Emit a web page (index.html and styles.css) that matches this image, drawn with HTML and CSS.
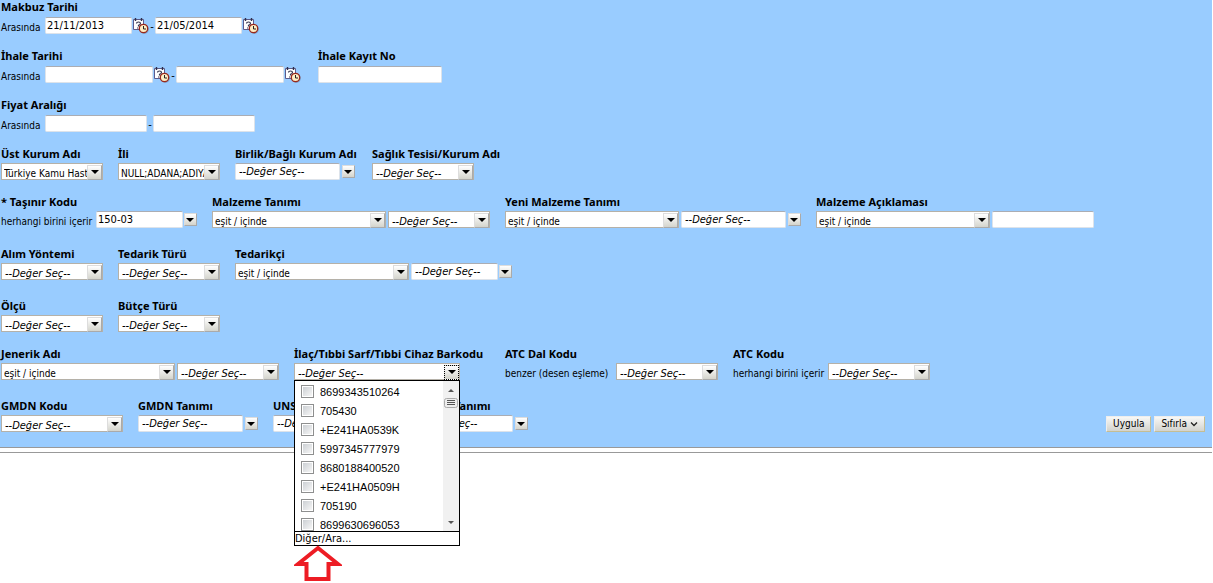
FILE: index.html
```html
<!DOCTYPE html>
<html lang="tr">
<head>
<meta charset="utf-8">
<title>Makbuz Sorgu</title>
<link rel="stylesheet" href="styles.css">
</head>
<body>
<svg class="defs" aria-hidden="true">
  <symbol id="cal" viewBox="0 0 16 16">
    <path d="M0.500 1.500h10v10h-10z" fill="#fff" stroke="#5c5c8c"/>
    <path d="M2.500 0v3M8.500 0v3" stroke="#30304c" stroke-width="1.400"/>
    <path d="M3.500 5.500q0-1.500 2-1.500t2 1.400q0 1-2 2v1" fill="none" stroke="#34344c" stroke-width="1.200"/>
    <path d="M4 10h1.200" stroke="#34344c"/>
    <circle cx="11.300" cy="11.300" r="4.600" fill="#6b86ae" opacity=".6"/>
    <circle cx="10.500" cy="10.500" r="4.200" fill="#ffeec4" stroke="#98291d" stroke-width="1.300"/>
    <path d="M10.500 8v3h2.500" fill="none" stroke="#222"/>
  </symbol>
</svg>
<form class="panel">
  <div class="row row-text">
    <div class="field">
      <label class="title" for="mt1">Makbuz Tarihi</label>
      <div class="controls"><span class="op">Arasında</span><input class="box w-date" id="mt1" value="21/11/2013"><button type="button" class="cal" aria-label="Takvim"><svg><use href="#cal"/></svg></button><span class="dash">-</span><input class="box w-date" aria-label="Bitiş" value="21/05/2014"><button type="button" class="cal" aria-label="Takvim"><svg><use href="#cal"/></svg></button></div>
    </div>
  </div>
  <div class="row row-text">
    <div class="field f-tender">
      <label class="title" for="it1">İhale Tarihi</label>
      <div class="controls"><span class="op">Arasında</span><input class="box w-range" id="it1"><button type="button" class="cal" aria-label="Takvim"><svg><use href="#cal"/></svg></button><span class="dash">-</span><input class="box w-range" aria-label="Bitiş"><button type="button" class="cal" aria-label="Takvim"><svg><use href="#cal"/></svg></button></div>
    </div>
    <div class="field">
      <label class="title" for="ikn">İhale Kayıt No</label>
      <div class="controls"><input class="box w-no" id="ikn"></div>
    </div>
  </div>
  <div class="row row-text">
    <div class="field">
      <label class="title" for="fa">Fiyat Aralığı</label>
      <div class="controls"><span class="op">Arasında</span><input class="box w-small" id="fa"><span class="dash">-</span><input class="box w-small" aria-label="Bitiş"></div>
    </div>
  </div>
  <div class="row">
    <div class="field">
      <label class="title" for="uka">Üst Kurum Adı</label>
      <div class="controls"><span class="pick w-small"><select id="uka"><option>Türkiye Kamu Hastaneleri</option></select></span></div>
    </div>
    <div class="field">
      <label class="title" for="ili">İli</label>
      <div class="controls"><span class="pick w-small"><select id="ili"><option>NULL;ADANA;ADIYAMAN</option></select></span></div>
    </div>
    <div class="field f-unit">
      <label class="title" for="bka">Birlik/Bağlı Kurum Adı</label>
      <div class="controls"><input class="box hint w-combo" id="bka" value="--Değer Seç--"><button type="button" class="drop" aria-label="Seç"></button></div>
    </div>
    <div class="field">
      <label class="title" for="stk">Sağlık Tesisi/Kurum Adı</label>
      <div class="controls"><span class="pick w-small"><select class="hint" id="stk"><option>--Değer Seç--</option></select></span></div>
    </div>
  </div>
  <div class="row row-loose">
    <div class="field">
      <label class="title" for="tk">* Taşınır Kodu</label>
      <div class="controls"><span class="op op-long">herhangi birini içerir</span><input class="box w-date" id="tk" value="150-03"><button type="button" class="drop" aria-label="Seç"></button></div>
    </div>
    <div class="field">
      <label class="title" for="mta">Malzeme Tanımı</label>
      <div class="controls"><span class="pick w-wide"><select id="mta"><option>eşit / içinde</option></select></span><span class="pick w-small"><select class="hint" aria-label="Değer"><option>--Değer Seç--</option></select></span></div>
    </div>
    <div class="field">
      <label class="title" for="ymt">Yeni Malzeme Tanımı</label>
      <div class="controls"><span class="pick w-wide"><select id="ymt"><option>eşit / içinde</option></select></span><input class="box hint w-combo" aria-label="Değer" value="--Değer Seç--"><button type="button" class="drop" aria-label="Seç"></button></div>
    </div>
    <div class="field">
      <label class="title" for="mac">Malzeme Açıklaması</label>
      <div class="controls"><span class="pick w-wide"><select id="mac"><option>eşit / içinde</option></select></span><input class="box w-small" aria-label="Değer"></div>
    </div>
  </div>
  <div class="row row-loose">
    <div class="field">
      <label class="title" for="ay">Alım Yöntemi</label>
      <div class="controls"><span class="pick w-small"><select class="hint" id="ay"><option>--Değer Seç--</option></select></span></div>
    </div>
    <div class="field">
      <label class="title" for="tt">Tedarik Türü</label>
      <div class="controls"><span class="pick w-small"><select class="hint" id="tt"><option>--Değer Seç--</option></select></span></div>
    </div>
    <div class="field">
      <label class="title" for="ted">Tedarikçi</label>
      <div class="controls"><span class="pick w-wide"><select id="ted"><option>eşit / içinde</option></select></span><input class="box hint w-date" aria-label="Değer" value="--Değer Seç--"><button type="button" class="drop" aria-label="Seç"></button></div>
    </div>
  </div>
  <div class="row">
    <div class="field">
      <label class="title" for="olc">Ölçü</label>
      <div class="controls"><span class="pick w-small"><select class="hint" id="olc"><option>--Değer Seç--</option></select></span></div>
    </div>
    <div class="field">
      <label class="title" for="but">Bütçe Türü</label>
      <div class="controls"><span class="pick w-small"><select class="hint" id="but"><option>--Değer Seç--</option></select></span></div>
    </div>
  </div>
  <div class="row row-loose">
    <div class="field">
      <label class="title" for="ja">Jenerik Adı</label>
      <div class="controls"><span class="pick w-wide"><select id="ja"><option>eşit / içinde</option></select></span><span class="pick w-small"><select class="hint" aria-label="Değer"><option>--Değer Seç--</option></select></span></div>
    </div>
    <div class="field f-barcode">
      <label class="title" for="bar">İlaç/Tıbbi Sarf/Tıbbi Cihaz Barkodu</label>
      <div class="controls"><span class="pick w-barcode is-open"><select class="hint" id="bar"><option>--Değer Seç--</option></select></span></div>
      <div class="popup">
        <div class="popup-body">
          <div class="list">
            <label class="item"><input type="checkbox">8699343510264</label>
            <label class="item"><input type="checkbox">705430</label>
            <label class="item"><input type="checkbox">+E241HA0539K</label>
            <label class="item"><input type="checkbox">5997345777979</label>
            <label class="item"><input type="checkbox">8680188400520</label>
            <label class="item"><input type="checkbox">+E241HA0509H</label>
            <label class="item"><input type="checkbox">705190</label>
            <label class="item"><input type="checkbox">8699630696053</label>
          </div>
          <div class="scroll">
            <svg class="scroll-top" viewBox="0 0 16 28"><path d="M5 11l3-3 3 3z" fill="#555"/><rect x="1.500" y="17.500" width="13" height="9" rx="2" fill="#eee" stroke="#aaa"/><path d="M4 19.500h8M4 21.500h8M4 23.500h8" stroke="#555"/></svg>
            <svg class="scroll-end" viewBox="0 0 16 16"><path d="M5 6h6l-3 3z" fill="#555"/></svg>
          </div>
        </div>
        <a class="more" href="#">Diğer/Ara...</a>
        <svg class="pointer" viewBox="0 0 48 38"><path d="M24 3L4 19h8.500v15h22V19H44z" fill="#fff" stroke="#ed1c24" stroke-width="4"/></svg>
      </div>
    </div>
    <div class="field">
      <label class="title" for="adk">ATC Dal Kodu</label>
      <div class="controls"><span class="op op-match">benzer (desen eşleme)</span><span class="pick w-small"><select class="hint" id="adk"><option>--Değer Seç--</option></select></span></div>
    </div>
    <div class="field">
      <label class="title" for="atc">ATC Kodu</label>
      <div class="controls"><span class="op op-long">herhangi birini içerir</span><span class="pick w-small"><select class="hint" id="atc"><option>--Değer Seç--</option></select></span></div>
    </div>
  </div>
  <div class="row">
    <div class="field">
      <label class="title" for="gk">GMDN Kodu</label>
      <div class="controls"><span class="pick w-code"><select class="hint" id="gk"><option>--Değer Seç--</option></select></span></div>
    </div>
    <div class="field">
      <label class="title" for="gt">GMDN Tanımı</label>
      <div class="controls"><input class="box hint w-combo" id="gt" value="--Değer Seç--"><button type="button" class="drop" aria-label="Seç"></button></div>
    </div>
    <div class="field">
      <label class="title" for="uk">UNSPSC Kodu</label>
      <div class="controls"><input class="box hint w-combo" id="uk" value="--Değer Seç--"><button type="button" class="drop" aria-label="Seç"></button></div>
    </div>
    <div class="field">
      <label class="title" for="ut">UNSPSC Tanımı</label>
      <div class="controls"><input class="box hint w-combo" id="ut" value="--Değer Seç--"><button type="button" class="drop" aria-label="Seç"></button></div>
    </div>
    <div class="actions">
      <button type="button" class="btn">Uygula</button>
      <button type="button" class="btn">Sıfırla<svg class="chev" viewBox="0 0 8 6"><path d="M1 1.500l3 3 3-3" fill="none" stroke="#222" stroke-width="1.300"/></svg></button>
    </div>
  </div>
</form>
<div class="rule"></div>
</body>
</html>
```
FILE: styles.css
```css
* {
  box-sizing: border-box;
}

body {
  min-height: 100vh;
  margin: 0;
  background: #fff;
  color: #000;
  font: 11px/14px "DejaVu Sans Condensed", "DejaVu Sans", sans-serif;
}

input,
select,
button {
  margin: 0;
  font: inherit;
  color: inherit;
}

.defs {
  position: absolute;
  width: 0;
  height: 0;
}

.panel {
  background: #99ccff;
  border-bottom: 1px solid #999;
  padding-left: 1px;
  margin-right: 1px;
}

.rule {
  height: 5px;
  margin-right: 1px;
  border-bottom: 1px solid #999;
}

.row {
  display: flex;
  gap: 15px;
  padding-bottom: 15px;
}

.row-loose {
  padding-bottom: 19px;
}

.field {
  display: flex;
  flex-direction: column;
  gap: 2px;
  position: relative;
  flex: none;
}

.row-text .field {
  gap: 3px;
}

.f-tender {
  width: 302px;
}

.f-unit {
  width: 122px;
}

.f-barcode {
  width: 196px;
}

.title {
  font-family: "Noto Sans", sans-serif;
  font-weight: bold;
  white-space: nowrap;
}

.controls {
  display: flex;
  align-items: center;
  gap: 1px;
  height: 17px;
}

.op {
  width: 43px;
  padding-top: 4px;
  font-size: 10px;
  white-space: nowrap;
}

.op-long {
  width: 94px;
}

.op-match {
  width: 110px;
}

.dash {
  width: 4px;
  padding-top: 3px;
  text-align: center;
}

.box {
  height: 17px;
  padding: 0 1px;
  border: 1px solid #dde3ea;
  border-top-color: #abadb3;
  border-radius: 2px;
  background: #fff;
}

.w-date {
  width: 87px;
}

.w-range {
  width: 108px;
}

.w-no {
  width: 124px;
}

.w-small {
  width: 102px;
}

.w-combo {
  width: 105px;
}

.w-wide {
  width: 174px;
}

.w-barcode {
  width: 166px;
}

.w-code {
  width: 122px;
}

.cal {
  width: 16px;
  height: 17px;
  padding: 0;
  border: 0;
  background: none;
}

.cal svg {
  display: block;
  width: 16px;
  height: 16px;
}

.pick {
  position: relative;
  display: block;
  height: 17px;
}

.pick + .pick,
.pick + .box,
.w-combo + .drop {
  margin-left: 1px;
}

.pick select {
  appearance: none;
  display: block;
  width: 100%;
  height: 17px;
  padding: 3px 13px 0 2px;
  border: 1px solid #b5b1a8;
  border-radius: 0;
  background: #fff;
  font-size: 10px;
  line-height: 14px;
}

.box.hint,
.pick .hint {
  padding-left: 3px;
  font-size: 11px;
  font-style: italic;
}

.pick::before,
.drop {
  width: 13px;
  height: 13px;
  padding: 0;
  border: 1px solid #aaa;
  border-top-color: #ddd;
  border-left-color: #ddd;
  background: linear-gradient(#fff, #d4d4cc);
}

.pick::before {
  content: "";
  position: absolute;
  top: 2px;
  right: 1px;
}

.is-open::before {
  border: 1px dotted #000;
}

.drop {
  position: relative;
}

.pick::after,
.drop::after {
  content: "";
  position: absolute;
  top: 7px;
  right: 4px;
  border: 4px solid transparent;
  border-top-color: #000;
  border-bottom: 0;
}

.drop::after {
  top: 4px;
  right: 2px;
}

.popup {
  position: absolute;
  z-index: 1;
  top: 33px;
  left: 0;
  width: 166px;
  border: 1px solid #000;
  background: #fff;
}

.popup-body {
  display: flex;
  height: 150px;
  overflow: hidden;
}

.list {
  flex: 1;
}

.item {
  display: flex;
  align-items: center;
  gap: 6px;
  height: 19px;
  padding: 2px 0 0 6px;
  font-family: "Liberation Sans", sans-serif;
}

.item input {
  appearance: none;
  width: 13px;
  height: 13px;
  border: 1px solid #8e8f8f;
  background: linear-gradient(135deg, #ccd0d4, #f6f6f6) content-box #f4f4f4;
  padding: 1px;
}

.scroll {
  display: flex;
  flex-direction: column;
  justify-content: space-between;
  width: 16px;
  background: #f1f1f1;
}

.scroll-top {
  height: 28px;
}

.scroll-end {
  height: 16px;
}

.more {
  display: block;
  border-top: 1px solid #000;
  color: #000;
  line-height: 13px;
  text-decoration: none;
}

.pointer {
  position: absolute;
  top: 164px;
  left: -1px;
  width: 48px;
  height: 38px;
}

.actions {
  display: flex;
  gap: 3px;
  align-items: flex-end;
  margin-left: auto;
  padding-right: 7px;
}

.btn {
  display: flex;
  align-items: center;
  gap: 3px;
  height: 16px;
  padding: 0 6px;
  border: 1px solid #c5bd93;
  border-top-color: #eee;
  border-left-color: #eee;
  background: linear-gradient(#f8f8f6, #d3d3cd);
  font-size: 10px;
}

.chev {
  width: 8px;
  height: 6px;
}
```
